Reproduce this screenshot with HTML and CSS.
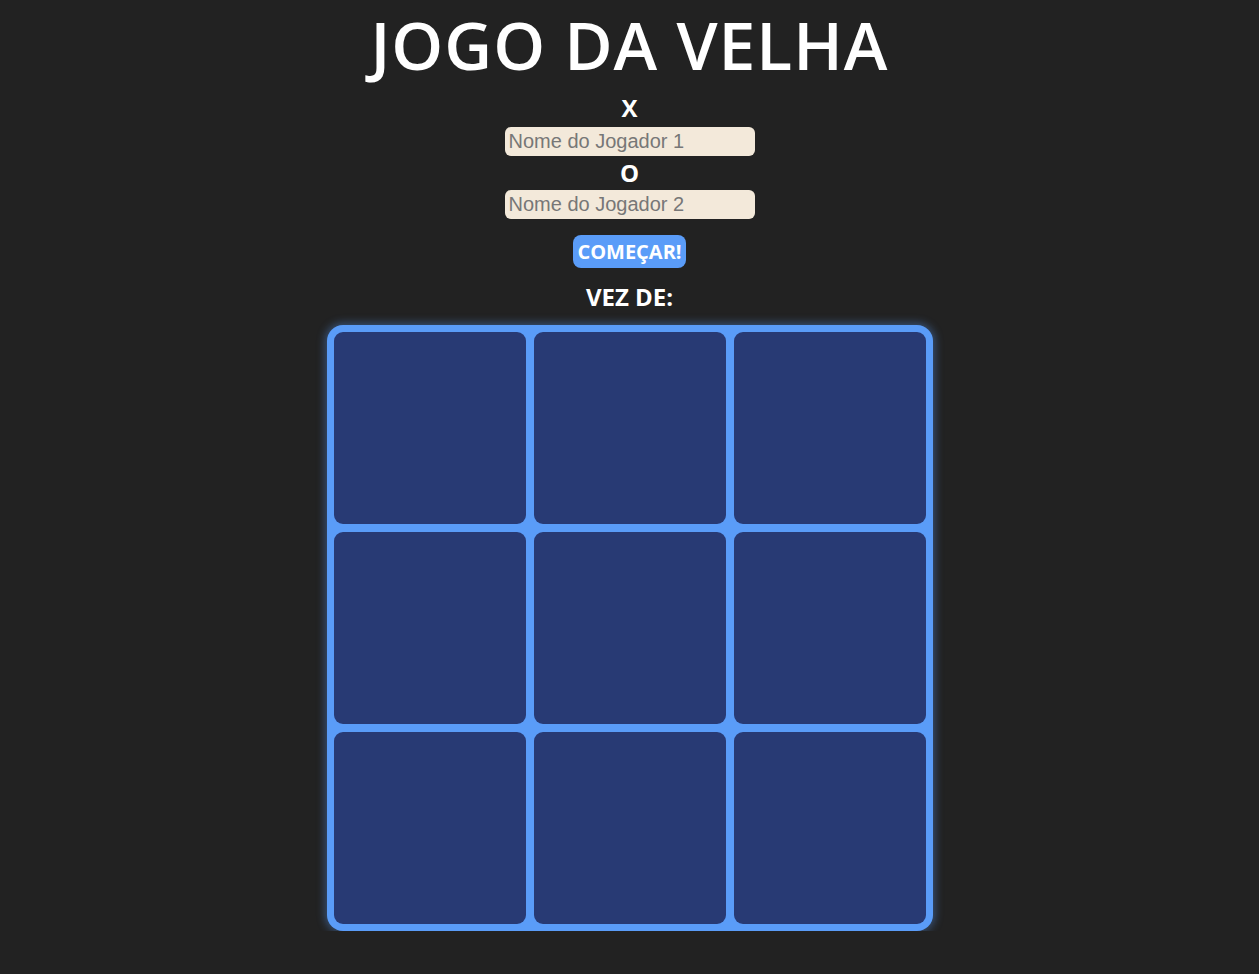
FILE: index.html
```html
<!DOCTYPE html>
<html lang="pt-BR">
<head>
<meta charset="utf-8">
<title>Jogo da Velha</title>
<link rel="stylesheet" href="styles.css">
</head>
<body>
<main class="app">
  <h1 class="title">JOGO DA VELHA</h1>
  <div class="players">
    <label class="mark mark-x" for="p1">X</label>
    <input class="name" id="p1" type="text" placeholder="Nome do Jogador 1">
    <label class="mark mark-o" for="p2">O</label>
    <input class="name" id="p2" type="text" placeholder="Nome do Jogador 2">
  </div>
  <button class="start" type="button">COMEÇAR!</button>
  <p class="turn">VEZ DE:</p>
  <div class="board">
    <div class="cell"></div><div class="cell"></div><div class="cell"></div>
    <div class="cell"></div><div class="cell"></div><div class="cell"></div>
    <div class="cell"></div><div class="cell"></div><div class="cell"></div>
  </div>
</main>
</body>
</html>
```
FILE: styles.css
```css
html, body {
  margin: 0;
  padding: 0;
  background: #222222;
}
body {
  font-family: "Open Sans", "Noto Sans", sans-serif;
  color: #ffffff;
}
.app {
  display: flex;
  flex-direction: column;
  align-items: center;
}
.title {
  margin: 0;
  font-size: 66px;
  font-weight: 600;
  line-height: 89px;
  letter-spacing: 1px;
}
.players {
  display: flex;
  flex-direction: column;
  align-items: center;
}
.mark {
  font-size: 24px;
  font-weight: 700;
}
.mark-x {
  line-height: 38px;
}
.mark-o {
  line-height: 34px;
}
.name {
  box-sizing: border-box;
  width: 250px;
  height: 29px;
  border: none;
  border-radius: 6px;
  background: #f3e9da;
  padding: 0 4px;
  font-family: "Liberation Sans", Arial, sans-serif;
  font-size: 20px;
  color: #333;
  outline: none;
}
.name::placeholder {
  color: #777777;
}
.start {
  margin-top: 16px;
  height: 33px;
  padding: 0 4px;
  border: none;
  border-radius: 8px;
  background: #5a9cf8;
  color: #ffffff;
  font-family: "Open Sans", "Noto Sans", sans-serif;
  font-size: 20px;
  font-weight: 700;
}
.turn {
  margin: 14px 0 0;
  font-size: 24px;
  font-weight: 700;
  line-height: 30px;
}
.board {
  margin-top: 13px;
  display: grid;
  grid-template-columns: repeat(3, 192px);
  grid-template-rows: repeat(3, 192px);
  gap: 8px;
  padding: 7px;
  background: #5a9cf8;
  border-radius: 16px;
  box-shadow: 0 0 8px 2px rgba(90, 156, 248, 0.4);
}
.cell {
  background: #283a74;
  border-radius: 9px;
}
```
